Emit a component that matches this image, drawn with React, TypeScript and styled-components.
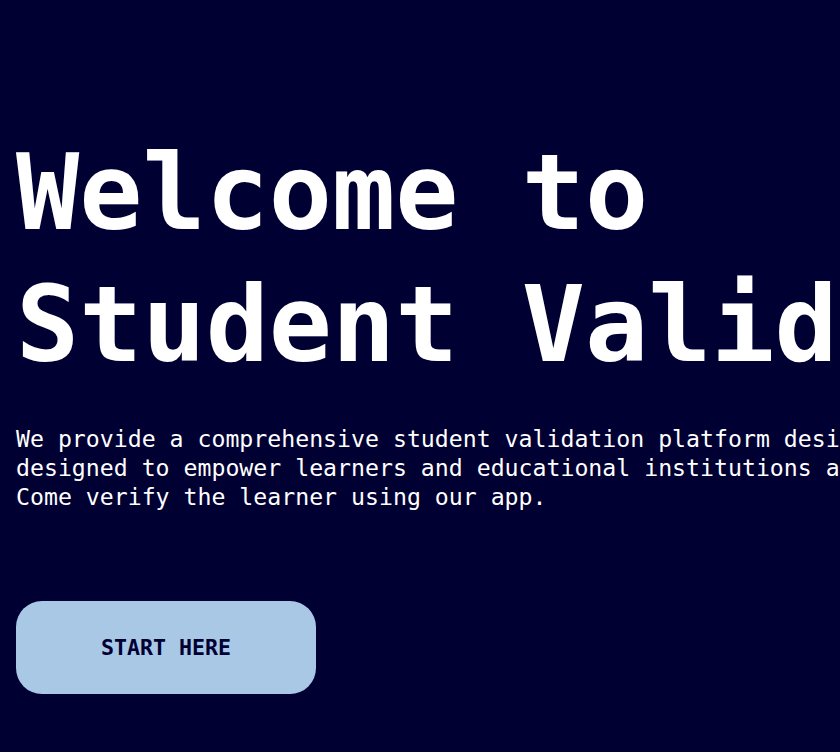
import React from "react";
import styled, { createGlobalStyle } from "styled-components";

const Global = createGlobalStyle`
  html, body {
    margin: 0;
    padding: 0;
    background: #000033;
  }
  body {
    font-family: "DejaVu Sans Mono", "Liberation Mono", monospace;
    color: #ffffff;
    overflow: hidden;
  }
`;

const Page = styled.main`
  min-height: 752px;
  width: 840px;
  box-sizing: border-box;
  padding: 127px 16px 0 16px;
  display: flex;
  flex-direction: column;
  overflow: hidden;
`;

const Title = styled.h1`
  margin: 0;
  font-size: 105px;
  line-height: 132px;
  font-weight: 700;
  white-space: nowrap;
`;

const Lead = styled.p`
  margin: 33px 0 0 0;
  font-size: 23.2px;
  line-height: 29px;
  white-space: nowrap;
`;

const StartButton = styled.button`
  margin-top: 90px;
  width: 300px;
  height: 93px;
  border: none;
  border-radius: 26px;
  background: #a8c8e6;
  color: #000033;
  font-family: "DejaVu Sans Mono", "Liberation Mono", monospace;
  font-size: 21.6px;
  font-weight: 700;
  cursor: pointer;
`;

export default function App() {
  return (
    <>
      <Global />
      <Page>
        <Title>
          Welcome to
          <br />
          Student Validation
        </Title>
        <Lead>
          We provide a comprehensive student validation platform designed to
          <br />
          designed to empower learners and educational institutions alike.
          <br />
          Come verify the learner using our app.
        </Lead>
        <StartButton>START HERE</StartButton>
      </Page>
    </>
  );
}
